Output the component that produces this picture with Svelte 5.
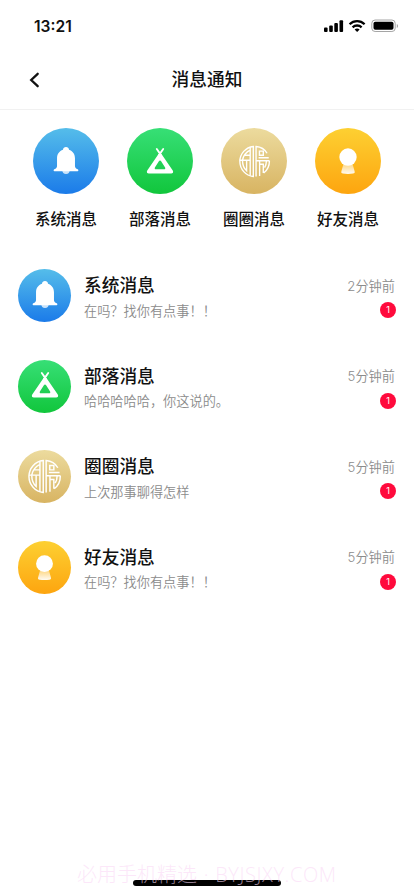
<script>
  // Shortcut categories across the top of the page
  const shortcuts = [
    { icon: 'bell', name: '系统消息' },
    { icon: 'tent', name: '部落消息' },
    { icon: 'circle', name: '圈圈消息' },
    { icon: 'friend', name: '好友消息' }
  ];

  const messages = [
    { icon: 'bell', name: '系统消息', text: '在吗？找你有点事！！', time: '2分钟前', unread: 1 },
    { icon: 'tent', name: '部落消息', text: '哈哈哈哈哈，你这说的。', time: '5分钟前', unread: 1 },
    { icon: 'circle', name: '圈圈消息', text: '上次那事聊得怎样', time: '5分钟前', unread: 1 },
    { icon: 'friend', name: '好友消息', text: '在吗？找你有点事！！', time: '5分钟前', unread: 1 }
  ];
</script>

{#snippet glyph(icon)}
  <svg class="glyph" viewBox="0 0 36 36" fill="none">
    {#if icon === 'bell'}
      <circle cx="18" cy="27.800" r="3.900" fill="#fff" opacity="0.75" />
      <path
        d="M18 3.300c1.800 0 3 1.100 3.200 2.800 3.900 1.400 6.300 4.700 6.300 8.900v8.200c0 1.600 1 2.800 2.900 3.600 1 .5 1 2-.2 2H5.800c-1.200 0-1.200-1.500-.2-2 1.900-.8 2.900-2 2.900-3.600V15c0-4.200 2.400-7.500 6.300-8.900.2-1.700 1.400-2.800 3.200-2.800z"
        fill="#fff"
      />
    {:else if icon === 'tent'}
      <path d="M14.600 5.300l4.300 6.200M21.400 5.300l-4.300 6.200" stroke="#fff" stroke-width="2" stroke-linecap="round" />
      <path
        fill-rule="evenodd"
        d="M15.900 11.300c.9-1.500 3.300-1.500 4.200 0l11.400 16.700c1 1.600.1 3.300-1.700 3.300H6.200c-1.800 0-2.700-1.700-1.700-3.300zM16.800 18.200l-4.200 6.600c-.6 1 0 2 1 2h8.800c1 0 1.600-1 1-2l-4.200-6.600c-.6-1-1.800-1-2.400 0z"
        fill="#fff"
      />
    {:else if icon === 'circle'}
      <g stroke="#fff" stroke-width="1.500">
        <!-- left half -->
        <path d="M16.700 1.600A16.500 16.500 0 0 0 16.700 34.400z" />
        <path d="M13.300 2.500v31M13.300 5.600C8.800 7.800 6 11.300 4.900 16.400M7.600 11.200h5.700M1.800 16.600h11.500" />
        <path d="M4.900 16.600c0 5 1.300 8.700 4.500 11.600V16.600" />
        <!-- right half -->
        <path d="M19.700 34.400V1.600c5 .4 9.600 3.300 12 7.400" />
        <path d="M23.400 6.700h4.200v4.500h-4.200zM22.500 13.900h11M19.700 17.200h14.600" />
        <path d="M34.300 17.200c0 5.600-2.300 10.400-6.300 13.400M23.600 17.200v16.500M23.600 21h4v9.500M31 17.200c0 3.300-.7 5.500-2 7.500" />
      </g>
    {:else}
      <path d="M13.500 20h9l2.500 8.800c.4 1.500-.2 2.300-1.700 2.500-3.500.6-7.100.6-10.600 0-1.500-.2-2.100-1-1.700-2.500z" fill="url(#friend-body)" />
      <circle cx="18" cy="13.800" r="9.200" fill="#fff" />
    {/if}
  </svg>
{/snippet}

<div class="page">
  <!-- Shared gradient for the friend icon -->
  <svg class="defs" width="0" height="0">
    <defs>
      <linearGradient id="friend-body" x1="0" y1="0" x2="0" y2="1">
        <stop offset="0.2" stop-color="#fff" stop-opacity="0.5" />
        <stop offset="1" stop-color="#fff" stop-opacity="0.95" />
      </linearGradient>
    </defs>
  </svg>

  <div class="status">
    <span class="clock">13:21</span>
    <svg width="75" height="14" viewBox="0 0 75 14">
      <rect x="0" y="8.500" width="3.600" height="4.500" rx="1" />
      <rect x="5.200" y="6.500" width="3.600" height="6.500" rx="1" />
      <rect x="10.300" y="4" width="3.600" height="9" rx="1" />
      <rect x="15.500" y="1.300" width="3.600" height="11.700" rx="1" />
      <g fill="none" stroke="#000" stroke-width="2.300">
        <path d="M25.600 5.200c4.200-4.100 10.800-4.100 15 0" />
        <path d="M28.600 8.300c2.500-2.400 6.500-2.400 9 0" />
      </g>
      <path d="M30.600 10.500c1.400-1.300 3.600-1.300 5 0L33.100 13z" />
      <rect x="47.800" y="1" width="23.400" height="11.500" rx="3.300" fill="none" stroke="#a5a5a5" />
      <rect x="49.500" y="2.700" width="20" height="8.100" rx="1.800" />
      <path d="M72.800 5v4c1.700-.7 1.700-3.300 0-4z" fill="#a5a5a5" />
    </svg>
  </div>

  <header>
    <svg class="back" width="12" height="16" viewBox="0 0 12 16">
      <path d="M9.700 1.800L3.200 8l6.500 6.200" fill="none" stroke="#111" stroke-width="2.300" stroke-linecap="round" />
    </svg>
    <h1>消息通知</h1>
  </header>

  <nav>
    {#each shortcuts as item}
      <div class="shortcut">
        <div class="icon {item.icon}">{@render glyph(item.icon)}</div>
        <span>{item.name}</span>
      </div>
    {/each}
  </nav>

  <main>
    {#each messages as msg}
      <div class="message">
        <div class="icon small {msg.icon}">{@render glyph(msg.icon)}</div>
        <div class="body">
          <h2>{msg.name}</h2>
          <p>{msg.text}</p>
        </div>
        <div class="meta">
          <time>{msg.time}</time>
          <span class="badge">{msg.unread}</span>
        </div>
      </div>
    {/each}
  </main>

  <footer>
    <div class="home-bar"></div>
    <span class="watermark">必用手机精选 · <span class="site">BYJSJXY.COM</span></span>
  </footer>
</div>

<style>
  :global(body) {
    background: #fff;
  }

  .page {
    display: flex;
    flex-direction: column;
    position: relative;
    width: 414px;
    height: 896px;
    overflow: hidden;
    background: #fff;
    color: #111;
    font-family: Inter, 'Noto Sans CJK SC', sans-serif;
  }

  .defs {
    position: absolute;
  }

  .status {
    display: flex;
    flex: none;
    align-items: center;
    justify-content: space-between;
    box-sizing: border-box;
    height: 50px;
    padding: 2px 15px 0 34px;
  }

  .clock {
    font-size: 15.600px;
    font-weight: 600;
  }

  header {
    display: grid;
    grid-template-columns: 57px 1fr 57px;
    flex: none;
    align-items: center;
    box-sizing: border-box;
    height: 60px;
    border-bottom: 1px solid #f1f1f1;
  }

  .back {
    margin-left: 28px;
  }

  h1 {
    margin: 0;
    font-size: 17.700px;
    font-weight: 500;
    line-height: 26px;
    text-align: center;
  }

  nav {
    display: flex;
    flex: none;
    justify-content: space-between;
    padding: 18px 33px 0;
  }

  .shortcut {
    display: flex;
    flex-direction: column;
    align-items: center;
    gap: 15px;
    width: 66px;
    font-size: 15.500px;
    font-weight: 500;
    line-height: 22px;
    white-space: nowrap;
  }

  .icon {
    display: flex;
    flex: none;
    align-items: center;
    justify-content: center;
    width: 66px;
    height: 66px;
    border-radius: 50%;
  }

  .icon.small {
    width: 53px;
    height: 53px;
  }

  .glyph {
    width: 34px;
    height: 34px;
  }

  .small .glyph {
    margin-bottom: 2px;
  }

  .circle .glyph {
    width: 33px;
    height: 33px;
  }

  .small.circle .glyph {
    width: 35px;
    height: 35px;
    margin: 0;
  }

  .small.friend .glyph {
    width: 33px;
    height: 33px;
    margin: 0;
  }

  .bell {
    background: linear-gradient(#55bdea, #1b7be9);
  }

  .tent {
    background: linear-gradient(#37df76, #11c63c);
  }

  .circle {
    background: linear-gradient(#ecdb9e, #d8b462);
  }

  .friend {
    background: linear-gradient(#fdd032, #fda50f);
  }

  main {
    display: flex;
    flex-direction: column;
    gap: 37.500px;
    padding: 38px 18px 0;
  }

  .message {
    display: flex;
    height: 53px;
  }

  .body {
    flex: 1;
    padding: 3px 0 0 13px;
  }

  h2 {
    margin: 0;
    font-size: 17.700px;
    font-weight: 500;
    line-height: 28px;
  }

  p {
    margin: -0.500px 0 0;
    color: #8b8b8b;
    font-size: 13.200px;
    font-weight: 350;
    line-height: 22px;
  }

  .meta {
    display: flex;
    flex-direction: column;
    align-items: flex-end;
    gap: 6.500px;
    padding-top: 6.500px;
  }

  time {
    margin-right: 1px;
    color: #8b8b8b;
    font-size: 13.200px;
    font-weight: 350;
    line-height: 20px;
  }

  .badge {
    width: 16px;
    height: 16px;
    border-radius: 50%;
    background: #ff0a3c;
    color: #fff;
    font-size: 9px;
    line-height: 16px;
    text-align: center;
  }

  footer {
    display: flex;
    flex: none;
    justify-content: center;
    position: relative;
    margin-top: auto;
    height: 16px;
  }

  .home-bar {
    width: 148px;
    height: 6px;
    border-radius: 3px;
    background: #000;
  }

  .watermark {
    position: absolute;
    left: 77px;
    bottom: 6px;
    color: rgba(250, 215, 245, 0.6);
    font-family: 'Open Sans', 'Noto Sans CJK SC', sans-serif;
    font-size: 20px;
    font-weight: 300;
    line-height: 30px;
    white-space: nowrap;
    word-spacing: 1.500px;
  }

  .site {
    letter-spacing: 0.600px;
  }
</style>
